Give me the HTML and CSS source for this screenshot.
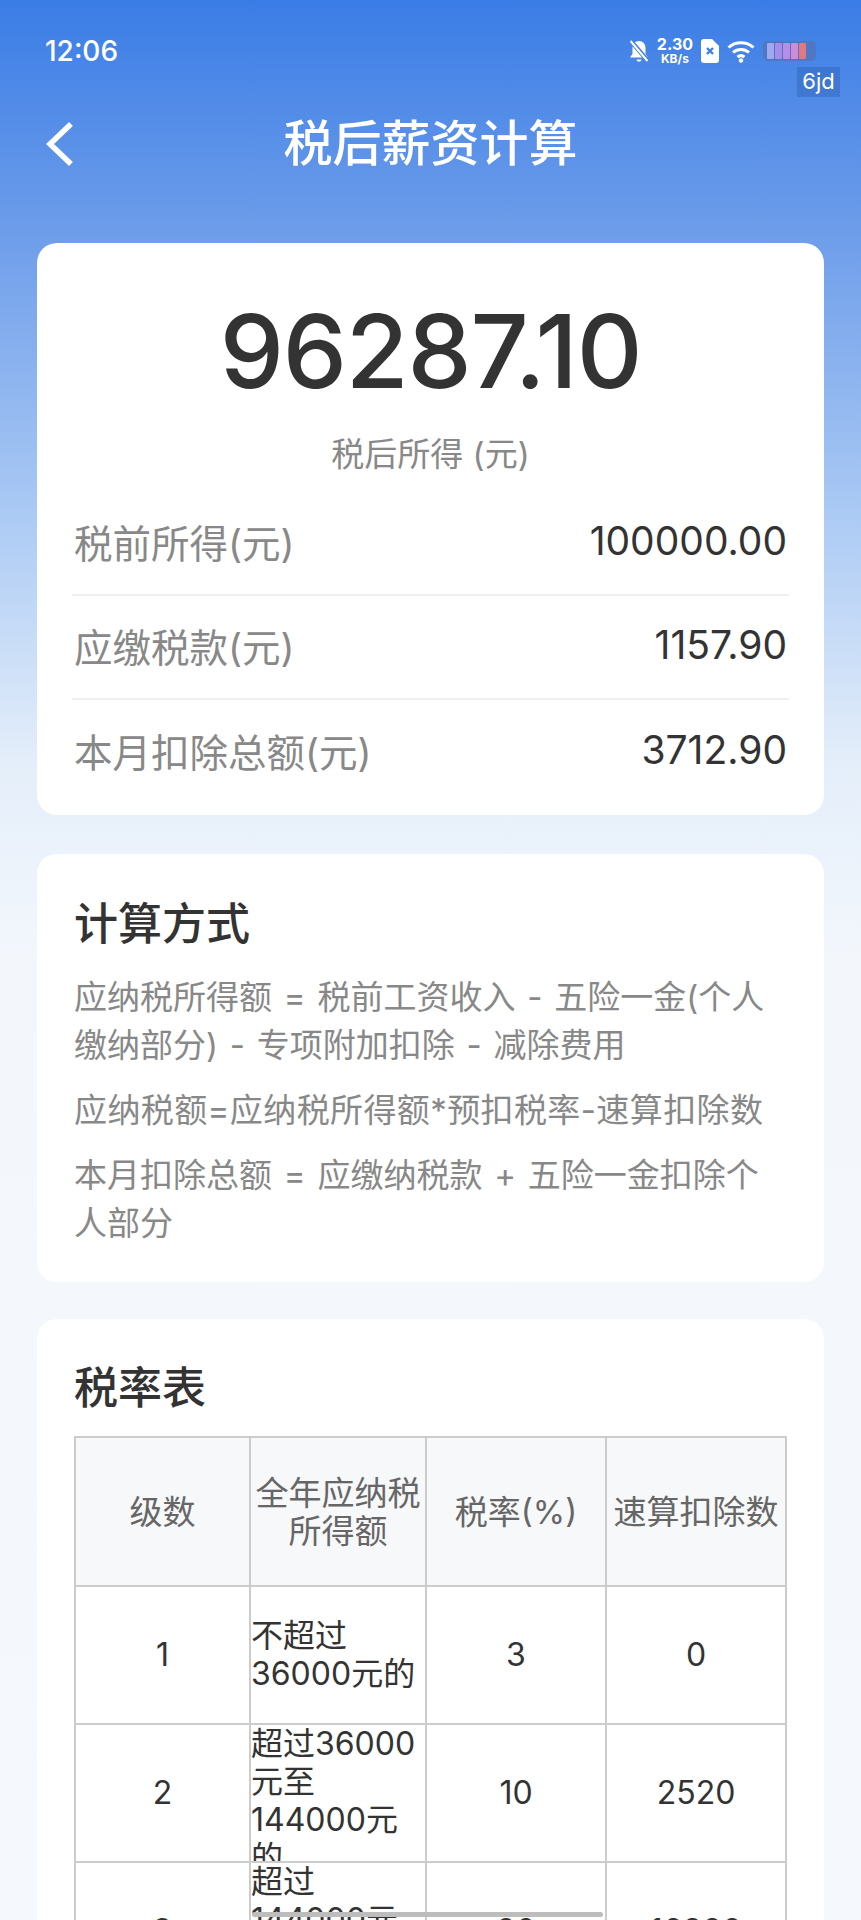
FILE: index.html
```html
<!DOCTYPE html>
<html lang="zh-CN">
<head>
    <meta charset="UTF-8">
    <meta name="viewport" content="width=device-width, initial-scale=1.0">
    <title>税后薪资计算</title>
    <link rel="stylesheet" href="styles.css">
</head>
<body>
    <div class="page">
        <!-- 状态栏 -->
        <div class="status-bar">
            <span class="time">12:06</span>
            <div class="status-icons">
                <svg class="icon-bell" viewBox="0 0 20 24" width="20" height="24">
                    <path d="M10 2c4 0 6.500 3 6.500 7v6l2.500 3.500H1L3.500 15V9C3.500 5 6 2 10 2z" fill="#fff"/>
                    <path d="M7.500 20.500h5c-.4 1.500-1.300 2.200-2.500 2.200s-2.100-.7-2.500-2.200z" fill="#fff"/>
                    <path d="M1 1l18 21" stroke="#3f80e6" stroke-width="4.500"/>
                    <path d="M1.500 2l17 20" stroke="#fff" stroke-width="2"/>
                </svg>
                <div class="speed"><span>2.30</span><span class="speed-unit">KB/s</span></div>
                <svg class="icon-sim" viewBox="0 0 18 24" width="18" height="24">
                    <path d="M3 0h8l7 7v14a3 3 0 0 1-3 3H3a3 3 0 0 1-3-3V3a3 3 0 0 1 3-3z" fill="#fff"/>
                    <path d="M6 9l6 6M12 9l-6 6" stroke="#3f80e6" stroke-width="2.400"/>
                </svg>
                <svg class="icon-wifi" viewBox="0 0 28 24" width="28" height="24">
                    <path d="M1.500 8.500c7-6.500 18-6.500 25 0" fill="none" stroke="#fff" stroke-width="3"/>
                    <path d="M6 13.500c4.500-4 11.500-4 16 0" fill="none" stroke="#fff" stroke-width="3"/>
                    <path d="M10.500 18c2-1.600 5-1.600 7 0" fill="none" stroke="#fff" stroke-width="3"/>
                    <circle cx="14" cy="21.500" r="2.200" fill="#fff"/>
                </svg>
                <div class="battery">
                    <i class="c1"></i><i class="c2"></i><i class="c3"></i><i class="c4"></i><i class="c5"></i>
                </div>
            </div>
            <span class="watermark">6jd</span>
        </div>

        <!-- 标题栏 -->
        <div class="nav-bar">
            <svg class="back" viewBox="0 0 30 46" width="30" height="46">
                <path d="M26 3L5 23l21 20" fill="none" stroke="#fff" stroke-width="5.500"/>
            </svg>
            <h1>税后薪资计算</h1>
        </div>

        <!-- 结果 -->
        <div class="card result-card">
            <div class="amount">96287.10</div>
            <div class="amount-label">税后所得 (元)</div>
            <div class="result-row"><span>税前所得(元)</span><b>100000.00</b></div>
            <div class="result-row"><span>应缴税款(元)</span><b>1157.90</b></div>
            <div class="result-row"><span>本月扣除总额(元)</span><b>3712.90</b></div>
        </div>

        <!-- 计算方式 -->
        <div class="card method-card">
            <h2>计算方式</h2>
            <p>应纳税所得额 = 税前工资收入 - 五险一金(个人缴纳部分) - 专项附加扣除 - 减除费用</p>
            <p class="formula">应纳税额=应纳税所得额*预扣税率-速算扣除数</p>
            <p>本月扣除总额 = 应缴纳税款 + 五险一金扣除个人部分</p>
        </div>

        <!-- 税率表 -->
        <div class="card rate-card">
            <h2>税率表</h2>
            <table>
                <colgroup>
                    <col class="col-level">
                    <col class="col-range">
                    <col class="col-rate">
                    <col class="col-deduct">
                </colgroup>
                <tr class="head">
                    <th><div class="cell">级数</div></th>
                    <th><div class="cell">全年应纳税所得额</div></th>
                    <th><div class="cell">税率(%)</div></th>
                    <th><div class="cell">速算扣除数</div></th>
                </tr>
                <tr>
                    <td><div class="cell">1</div></td>
                    <td><div class="cell left">不超过36000元的</div></td>
                    <td><div class="cell">3</div></td>
                    <td><div class="cell">0</div></td>
                </tr>
                <tr>
                    <td><div class="cell">2</div></td>
                    <td><div class="cell left">超过36000元至144000元的</div></td>
                    <td><div class="cell">10</div></td>
                    <td><div class="cell">2520</div></td>
                </tr>
                <tr>
                    <td><div class="cell">3</div></td>
                    <td><div class="cell left">超过144000元至300000元的</div></td>
                    <td><div class="cell">20</div></td>
                    <td><div class="cell">16920</div></td>
                </tr>
            </table>
        </div>

        <div class="scrollbar"></div>
    </div>
</body>
</html>
```

FILE: styles.css
```css
* {
    box-sizing: border-box;
}
body {
    margin: 0;
    font-family: Inter, "Noto Sans CJK SC", sans-serif;
    color: #333;
}
.page {
    position: relative;
    width: 861px;
    height: 1920px;
    overflow: hidden;
    padding: 0 37px;
    background: linear-gradient(180deg, #3a7de6 0, #6f9eea 240px, #a8c8f4 500px, #e4eefa 760px, #f3f7fc 960px, #f5f8fc 1920px);
}
.status-bar {
    position: relative;
    display: flex;
    align-items: center;
    justify-content: space-between;
    height: 97px;
    padding: 4px 0 0 8px;
    color: #fff;
}
.time {
    font-size: 28px;
    font-weight: 500;
}
.status-icons {
    display: flex;
    align-items: center;
    gap: 8px;
    margin-right: 8px;
}
.speed {
    display: flex;
    flex-direction: column;
    align-items: center;
    font-size: 16px;
    font-weight: 700;
    line-height: 15px;
}
.speed-unit {
    font-size: 12px;
    line-height: 13px;
}
.battery {
    display: flex;
    gap: 1px;
    width: 53px;
    height: 20px;
    padding: 2px 10px 2px 4px;
    border-radius: 5px;
    background: #4f78c4;
    filter: blur(0.6px);
}
.battery i {
    flex: 1;
    border-radius: 1px;
}
.battery .c1 { background: #a0a8ee; }
.battery .c2 { background: #a78de8; }
.battery .c3 { background: #b98ce8; }
.battery .c4 { background: #d08ad8; }
.battery .c5 { background: #e07a80; }
.watermark {
    position: absolute;
    right: -16px;
    top: 67px;
    width: 43px;
    height: 30px;
    background: rgba(40, 90, 170, 0.35);
    font-size: 22px;
    line-height: 29px;
    text-align: center;
}
.nav-bar {
    position: relative;
    height: 92px;
    margin-bottom: 54px;
}
.nav-bar h1 {
    margin: 0;
    font-size: 49px;
    font-weight: 500;
    line-height: 93px;
    text-align: center;
    color: #fff;
}
.back {
    position: absolute;
    left: 8px;
    top: 24px;
}
.card {
    background-color: #fff;
    border-radius: 20px;
    padding: 0 37px;
}
.result-card {
    height: 572px;
    margin-bottom: 39px;
    padding-top: 58px;
}
.amount {
    font-size: 102px;
    line-height: 100px;
    font-weight: 500;
    letter-spacing: -1.200px;
    text-align: center;
}
.amount-label {
    margin-top: 30px;
    margin-bottom: 15px;
    font-size: 33px;
    line-height: 46px;
    text-align: center;
    color: #888;
}
.result-row {
    display: flex;
    align-items: center;
    justify-content: space-between;
    height: 104px;
    margin: 0 -2px;
    padding: 0 2px 5px;
    border-bottom: 2px solid #f0f0f0;
    font-size: 38.500px;
    color: #888;
}
.result-row:last-child {
    border-bottom: none;
}
.result-row b {
    font-size: 39px;
    font-weight: 400;
    color: #333;
}
.method-card {
    height: 428px;
    margin-bottom: 37px;
    padding-top: 39px;
}
h2 {
    margin: 0;
    font-size: 44px;
    font-weight: 500;
    line-height: 62px;
}
.method-card p {
    margin: 0 0 17px;
    font-size: 33px;
    line-height: 48px;
    word-spacing: 2.500px;
    color: #888;
}
.method-card .formula {
    letter-spacing: 0.400px;
}
.method-card h2 {
    margin-bottom: 18px;
}
.rate-card {
    height: 700px;
    padding-top: 38px;
}
.rate-card h2 {
    margin-bottom: 17px;
}
table {
    width: 711px;
    table-layout: fixed;
    border-collapse: collapse;
    border: 2px solid #ccc;
}
.col-level { width: 175px; }
.col-range { width: 176px; }
.col-rate { width: 180px; }
.col-deduct { width: 180px; }
th, td {
    padding: 0;
    border: 2px solid #ccc;
    font-size: 32px;
    font-weight: 400;
}
th {
    background-color: #f7f8fa;
    font-size: 33px;
    color: #666;
}
.cell {
    display: flex;
    align-items: safe center;
    justify-content: center;
    height: 136px;
    overflow: hidden;
    padding: 0 1px;
    line-height: 38px;
    text-align: center;
}
.head .cell {
    height: 147px;
}
.cell.left {
    justify-content: flex-start;
    padding: 0;
    text-align: left;
}
.scrollbar {
    position: absolute;
    left: 252px;
    top: 1912px;
    width: 351px;
    height: 5px;
    border-radius: 3px;
    background: #bdbdbd;
}
```
